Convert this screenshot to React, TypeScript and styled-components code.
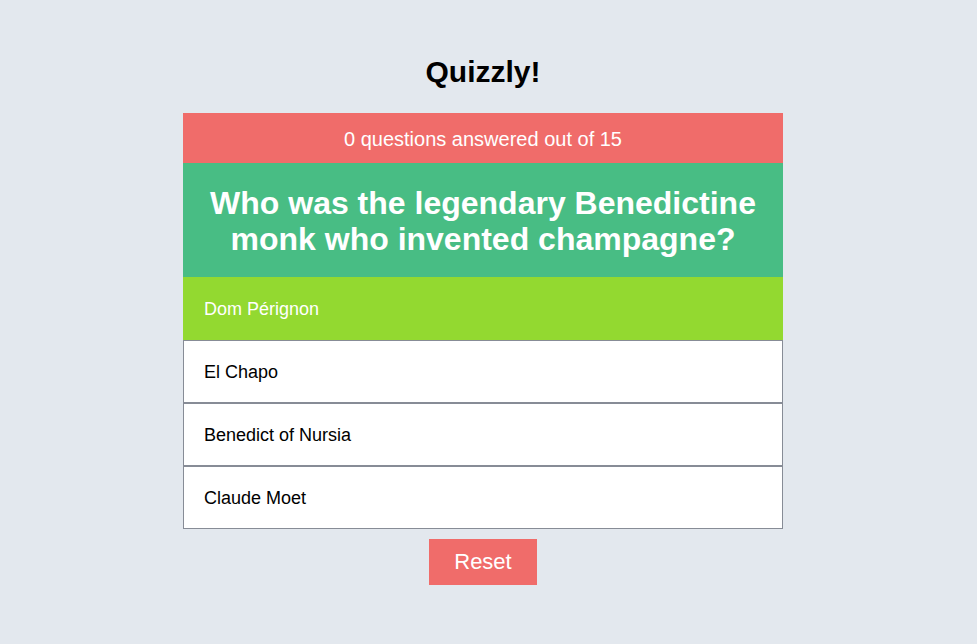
import * as React from 'react';
import styled, { createGlobalStyle } from 'styled-components';

const GlobalStyle = createGlobalStyle`
  body {
    margin: 0;
    background: #e3e8ee;
    font-family: "Liberation Sans", Arial, Helvetica, sans-serif;
  }
`;

const Page = styled.div`
  display: flex;
  flex-direction: column;
  align-items: center;
  padding: 54px 11px 0 0;
`;

const Title = styled.h1`
  margin: 0 0 24px;
  font-size: 30px;
  line-height: 35px;
  font-weight: 700;
  color: #000;
`;

const Card = styled.div`
  width: 600px;
  display: flex;
  flex-direction: column;
`;

const Progress = styled.div`
  box-sizing: border-box;
  height: 50px;
  padding-top: 2px;
  display: flex;
  align-items: center;
  justify-content: center;
  background: #f06c6a;
  color: #fff;
  font-size: 20px;
`;

const Question = styled.h2`
  margin: 0;
  padding: 22px 20px 20px;
  background: #48bd84;
  color: #fff;
  text-align: center;
  font-size: 32px;
  line-height: 36px;
  font-weight: 700;
`;

const Answer = styled.button<{ $selected?: boolean }>`
  box-sizing: border-box;
  height: 63px;
  padding: 2px 20px 0;
  display: flex;
  align-items: center;
  text-align: left;
  font-family: inherit;
  font-size: 18px;
  cursor: pointer;
  border: 1px solid ${p => (p.$selected ? '#93d930' : '#878c96')};
  background: ${p => (p.$selected ? '#93d930' : '#fff')};
  color: ${p => (p.$selected ? '#fff' : '#000')};
`;

const ResetButton = styled.button`
  margin-top: 10px;
  width: 108px;
  height: 46px;
  border: none;
  background: #f06c6a;
  color: #fff;
  font-family: inherit;
  font-size: 22px;
  cursor: pointer;
`;

const answers = ['Dom Pérignon', 'El Chapo', 'Benedict of Nursia', 'Claude Moet'];

export default function App() {
  const [selected, setSelected] = React.useState(0);

  return (
    <Page>
      <GlobalStyle />
      <Title>Quizzly!</Title>
      <Card>
        <Progress>0 questions answered out of 15</Progress>
        <Question>Who was the legendary Benedictine monk who invented champagne?</Question>
        {answers.map((a, i) => (
          <Answer key={a} $selected={i === selected} onClick={() => setSelected(i)}>
            {a}
          </Answer>
        ))}
      </Card>
      <ResetButton onClick={() => setSelected(0)}>Reset</ResetButton>
    </Page>
  );
}
